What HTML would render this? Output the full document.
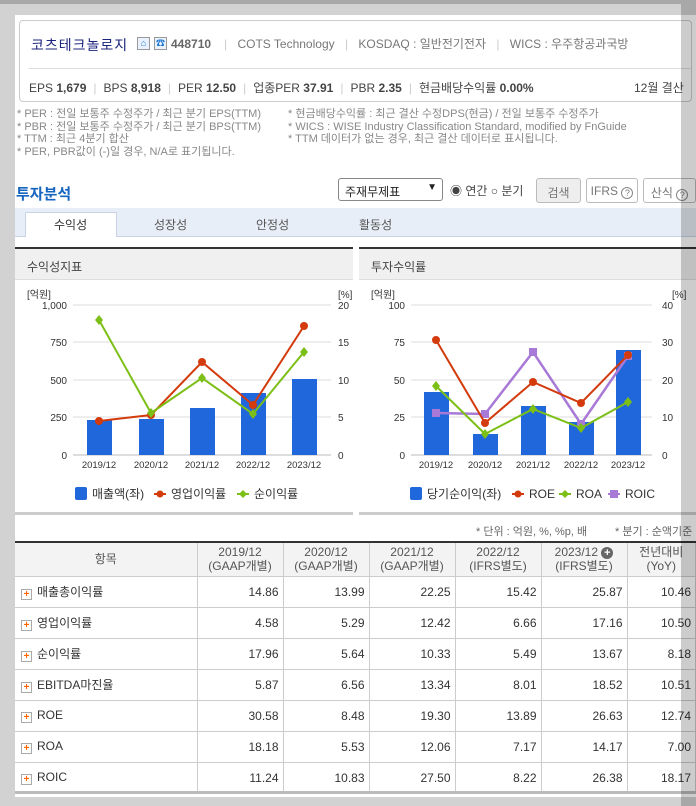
<!DOCTYPE html>
<html><head><meta charset="utf-8"><style>
*{margin:0;padding:0;box-sizing:border-box}
body{width:696px;height:806px;background:#d2d2d2;font-family:"Liberation Sans","Noto Sans CJK KR",sans-serif;position:relative;overflow:hidden;color:#333}
.a{position:absolute;white-space:nowrap}
#main{position:absolute;left:15px;top:15px;width:681px;height:782px;background:#fff}
.hb{position:absolute;left:19px;top:20px;width:673px;height:82px;border:1px solid #ccc;border-radius:4px;background:#fff}
.note{font-size:11px;color:#888;line-height:12.7px}
.sep{color:#ccc;margin:0 7px}
.ph{position:absolute;height:33px;background:#f0f0f0;border-top:2px solid #333;border-bottom:1px solid #ddd;font-size:12px;color:#444;padding:9px 12px}
table{border-collapse:collapse;position:absolute;left:15px;top:541px;width:681px;font-size:12px;border-top:2px solid #333}
td,th{border:1px solid #ccc;height:31px;text-align:right;padding-right:4px;color:#333}
th{background:#f3f3f3;font-weight:normal;text-align:center;height:34px;line-height:14px;color:#555;padding:0}
td.l{text-align:left;padding-left:6px;border-left:none}
.pl{display:inline-block;width:11px;height:11px;border:1px solid #aaa;color:#f60;font-size:10px;line-height:9px;text-align:center;font-weight:bold;margin-right:5px;vertical-align:-1px;background:#fff}
.btn{position:absolute;top:178px;height:25px;border:1px solid #bbb;border-radius:3px;font-size:12px;color:#777;padding:5px 0;text-align:center;white-space:nowrap}
.q{display:inline-block;width:12px;height:12px;border:1px solid #888;border-radius:6px;font-size:9px;line-height:10px;vertical-align:-1px}
</style></head><body>
<div style="position:absolute;left:0;top:0;width:696px;height:4px;background:#a8a8a8"></div>
<div id="main"></div>
<div class="hb"></div>
<div class="a" style="left:31px;top:35px;font-size:14px;color:#1a237e;letter-spacing:1px">코츠테크놀로지</div>
<div class="a" style="left:137px;top:37px;width:13px;height:13px;border:1px solid #999;background:#eaf2ff;font-size:9px;color:#1976d2;text-align:center;line-height:11px">⌂</div>
<div class="a" style="left:154px;top:37px;width:13px;height:13px;border:1px solid #999;background:#eaf2ff;font-size:9px;color:#1976d2;text-align:center;line-height:11px">☎</div>
<div class="a" style="left:171px;top:37px;font-size:12px;font-weight:bold;color:#666">448710</div>
<div class="a" style="left:224px;top:35px;font-size:12px;color:#777"><span class="sep" style="margin-left:0">|</span> COTS Technology <span class="sep">|</span> KOSDAQ : 일반전기전자 <span class="sep">|</span> WICS : 우주항공과국방</div>
<div class="a" style="left:29px;top:68px;width:663px;height:1px;background:#ddd"></div>
<div class="a" style="left:29px;top:79px;font-size:12px;color:#444">EPS <b>1,679</b><span class="sep">|</span>BPS <b>8,918</b><span class="sep">|</span>PER <b>12.50</b><span class="sep">|</span>업종PER <b>37.91</b><span class="sep">|</span>PBR <b>2.35</b><span class="sep">|</span>현금배당수익률 <b>0.00%</b></div>
<div class="a" style="left:634px;top:79px;font-size:12px;color:#444">12월 결산</div>
<div class="a note" style="left:17px;top:108px">* PER : 전일 보통주 수정주가 / 최근 분기 EPS(TTM)<br>* PBR : 전일 보통주 수정주가 / 최근 분기 BPS(TTM)<br>* TTM : 최근 4분기 합산<br>* PER, PBR값이 (-)일 경우, N/A로 표기됩니다.</div>
<div class="a note" style="left:288px;top:108px">* 현금배당수익률 : 최근 결산 수정DPS(현금) / 전일 보통주 수정주가<br>* WICS : WISE Industry Classification Standard, modified by FnGuide<br>* TTM 데이터가 없는 경우, 최근 결산 데이터로 표시됩니다.</div>
<div class="a" style="left:16px;top:183px;font-size:15px;color:#1565c0;font-weight:bold">투자분석</div>
<div class="a" style="left:338px;top:178px;width:105px;height:23px;border:1px solid #888;border-radius:3px;font-size:12px;padding:4px 6px;color:#222">주재무제표<span style="position:absolute;right:5px;top:3px;font-size:10px">▼</span></div>
<div class="a" style="left:450px;top:182px;font-size:12px;color:#444">◉ 연간 ○ 분기</div>
<div class="btn" style="left:536px;width:45px;background:#eee">검색</div>
<div class="btn" style="left:586px;width:52px">IFRS <span class="q">?</span></div>
<div class="btn" style="left:643px;width:53px">산식 <span class="q">?</span></div>
<div class="a" style="left:15px;top:208px;width:681px;height:29px;background:#e8eef7;border-bottom:1px solid #c9d3e3"></div>
<div class="a" style="left:25px;top:212px;width:92px;height:25px;background:#fff;border:1px solid #c9d3e3;border-bottom:none"></div>
<div class="a" style="left:54px;top:216px;font-size:12px;color:#333">수익성</div>
<div class="a" style="left:154px;top:216px;font-size:12px;color:#555">성장성</div>
<div class="a" style="left:256px;top:216px;font-size:12px;color:#555">안정성</div>
<div class="a" style="left:359px;top:216px;font-size:12px;color:#555">활동성</div>
<div class="ph" style="left:15px;top:247px;width:338px">수익성지표</div>
<div class="ph" style="left:359px;top:247px;width:337px">투자수익률</div>
<div class="a" style="left:15px;top:512px;width:338px;height:3px;background:#ccc"></div>
<div class="a" style="left:359px;top:512px;width:337px;height:3px;background:#ccc"></div>
<svg class="a" style="left:0;top:0" width="696" height="520" font-family="Liberation Sans,Noto Sans CJK KR,sans-serif" font-size="10" fill="#333">
<g stroke="#ddd"><line x1="73" x2="331" y1="305" y2="305"/><line x1="73" x2="331" y1="342" y2="342"/><line x1="73" x2="331" y1="380" y2="380"/><line x1="73" x2="331" y1="417" y2="417"/>
<line x1="411" x2="652" y1="305" y2="305"/><line x1="411" x2="652" y1="342" y2="342"/><line x1="411" x2="652" y1="380" y2="380"/><line x1="411" x2="652" y1="417" y2="417"/></g>
<g stroke="#bbb"><line x1="73" x2="331" y1="455" y2="455"/><line x1="411" x2="652" y1="455" y2="455"/></g>
<text x="27" y="298">[억원]</text><text x="338" y="298">[%]</text>
<g text-anchor="end"><text x="67" y="309">1,000</text><text x="67" y="346">750</text><text x="67" y="384">500</text><text x="67" y="421">250</text><text x="67" y="459">0</text>
<text x="405" y="309">100</text><text x="405" y="346">75</text><text x="405" y="384">50</text><text x="405" y="421">25</text><text x="405" y="459">0</text></g>
<text x="338" y="309">20</text><text x="338" y="346">15</text><text x="338" y="384">10</text><text x="338" y="421">5</text><text x="338" y="459">0</text>
<text x="371" y="298">[억원]</text><text x="672" y="298">[%]</text>
<text x="662" y="309">40</text><text x="662" y="346">30</text><text x="662" y="384">20</text><text x="662" y="421">10</text><text x="662" y="459">0</text>
<g text-anchor="middle" font-size="9.5"><text x="99" y="468">2019/12</text><text x="151" y="468">2020/12</text><text x="202" y="468">2021/12</text><text x="253" y="468">2022/12</text><text x="304" y="468">2023/12</text>
<text x="436" y="468">2019/12</text><text x="485" y="468">2020/12</text><text x="533" y="468">2021/12</text><text x="581" y="468">2022/12</text><text x="628" y="468">2023/12</text></g>
<g fill="#2167dc"><rect x="87" y="420" width="25" height="35"/><rect x="139" y="419" width="25" height="36"/><rect x="190" y="408" width="25" height="47"/><rect x="241" y="393" width="25" height="62"/><rect x="292" y="379" width="25" height="76"/>
<rect x="424" y="392" width="25" height="63"/><rect x="473" y="434" width="25" height="21"/><rect x="521" y="406" width="25" height="49"/><rect x="569" y="422" width="25" height="33"/><rect x="616" y="350" width="25" height="105"/></g>
<polyline fill="none" stroke="#d33a0c" stroke-width="2" points="99,421 151,415 202,362 253,405 304,326"/>
<g fill="#d33a0c"><circle cx="99" cy="421" r="4"/><circle cx="151" cy="415" r="4"/><circle cx="202" cy="362" r="4"/><circle cx="253" cy="405" r="4"/><circle cx="304" cy="326" r="4"/></g>
<polyline fill="none" stroke="#7cbf17" stroke-width="2" points="99,320 151,413 202,378 253,414 304,352"/>
<g fill="#7cbf17"><path d="M99 315l4 5-4 5-4-5z"/><path d="M151 408l4 5-4 5-4-5z"/><path d="M202 373l4 5-4 5-4-5z"/><path d="M253 409l4 5-4 5-4-5z"/><path d="M304 347l4 5-4 5-4-5z"/></g>
<polyline fill="none" stroke="#a879d6" stroke-width="2.5" points="436,413 485,414 533,352 581,424 628,356"/>
<g fill="#a879d6"><rect x="432" y="409" width="8" height="8"/><rect x="481" y="410" width="8" height="8"/><rect x="529" y="348" width="8" height="8"/><rect x="577" y="420" width="8" height="8"/><rect x="624" y="352" width="8" height="8"/></g>
<polyline fill="none" stroke="#d33a0c" stroke-width="2" points="436,340 485,423 533,382 581,403 628,355"/>
<g fill="#d33a0c"><circle cx="436" cy="340" r="4"/><circle cx="485" cy="423" r="4"/><circle cx="533" cy="382" r="4"/><circle cx="581" cy="403" r="4"/><circle cx="628" cy="355" r="4"/></g>
<polyline fill="none" stroke="#7cbf17" stroke-width="2" points="436,386 485,434 533,409 581,428 628,402"/>
<g fill="#7cbf17"><path d="M436 381l4 5-4 5-4-5z"/><path d="M485 429l4 5-4 5-4-5z"/><path d="M533 404l4 5-4 5-4-5z"/><path d="M581 423l4 5-4 5-4-5z"/><path d="M628 397l4 5-4 5-4-5z"/></g>
<g font-size="12"><rect x="75" y="487" width="12" height="13" rx="2" fill="#2167dc"/><text x="92" y="498">매출액(좌)</text>
<circle cx="160" cy="494" r="3.5" fill="#d33a0c"/><rect x="154" y="493" width="12" height="2" fill="#d33a0c"/><text x="171" y="498">영업이익률</text>
<path d="M243 490l4 4-4 4-4-4z" fill="#7cbf17"/><rect x="237" y="493" width="12" height="2" fill="#7cbf17"/><text x="254" y="498">순이익률</text>
<rect x="410" y="487" width="12" height="13" rx="2" fill="#2167dc"/><text x="427" y="498">당기순이익(좌)</text>
<circle cx="518" cy="494" r="3.5" fill="#d33a0c"/><rect x="512" y="493" width="12" height="2" fill="#d33a0c"/><text x="529" y="498">ROE</text>
<path d="M565 490l4 4-4 4-4-4z" fill="#7cbf17"/><rect x="559" y="493" width="12" height="2" fill="#7cbf17"/><text x="576" y="498">ROA</text>
<rect x="610" y="490" width="8" height="8" fill="#a879d6"/><rect x="608" y="493" width="12" height="2" fill="#a879d6"/><text x="625" y="498">ROIC</text></g>
</svg>
<div class="a" style="left:476px;top:523px;font-size:11px;color:#666">* 단위 : 억원, %, %p, 배</div>
<div class="a" style="left:615px;top:523px;font-size:11px;color:#666">* 분기 : 순액기준</div>
<table>
<colgroup><col style="width:182px"><col style="width:86px"><col style="width:86px"><col style="width:86px"><col style="width:86px"><col style="width:86px"><col></colgroup>
<tr><th style="border-left:none">항목</th><th>2019/12<br>(GAAP개별)</th><th>2020/12<br>(GAAP개별)</th><th>2021/12<br>(GAAP개별)</th><th>2022/12<br>(IFRS별도)</th><th>2023/12 <span style="display:inline-block;width:12px;height:12px;border-radius:6px;background:#666;color:#fff;font-size:11px;line-height:12px;font-weight:bold">+</span><br>(IFRS별도)</th><th>전년대비<br>(YoY)</th></tr>
<tr><td class="l"><span class="pl">+</span>매출총이익률</td><td>14.86</td><td>13.99</td><td>22.25</td><td>15.42</td><td>25.87</td><td>10.46</td></tr>
<tr><td class="l"><span class="pl">+</span>영업이익률</td><td>4.58</td><td>5.29</td><td>12.42</td><td>6.66</td><td>17.16</td><td>10.50</td></tr>
<tr><td class="l"><span class="pl">+</span>순이익률</td><td>17.96</td><td>5.64</td><td>10.33</td><td>5.49</td><td>13.67</td><td>8.18</td></tr>
<tr><td class="l"><span class="pl">+</span>EBITDA마진율</td><td>5.87</td><td>6.56</td><td>13.34</td><td>8.01</td><td>18.52</td><td>10.51</td></tr>
<tr><td class="l"><span class="pl">+</span>ROE</td><td>30.58</td><td>8.48</td><td>19.30</td><td>13.89</td><td>26.63</td><td>12.74</td></tr>
<tr><td class="l"><span class="pl">+</span>ROA</td><td>18.18</td><td>5.53</td><td>12.06</td><td>7.17</td><td>14.17</td><td>7.00</td></tr>
<tr><td class="l"><span class="pl">+</span>ROIC</td><td>11.24</td><td>10.83</td><td>27.50</td><td>8.22</td><td>26.38</td><td>18.17</td></tr>
</table>
<div class="a" style="left:15px;top:791px;width:681px;height:3px;background:#bbb"></div>
<div class="a" style="left:681px;top:4px;width:15px;height:802px;background:rgba(0,0,0,0.2)"></div>
</body></html>
